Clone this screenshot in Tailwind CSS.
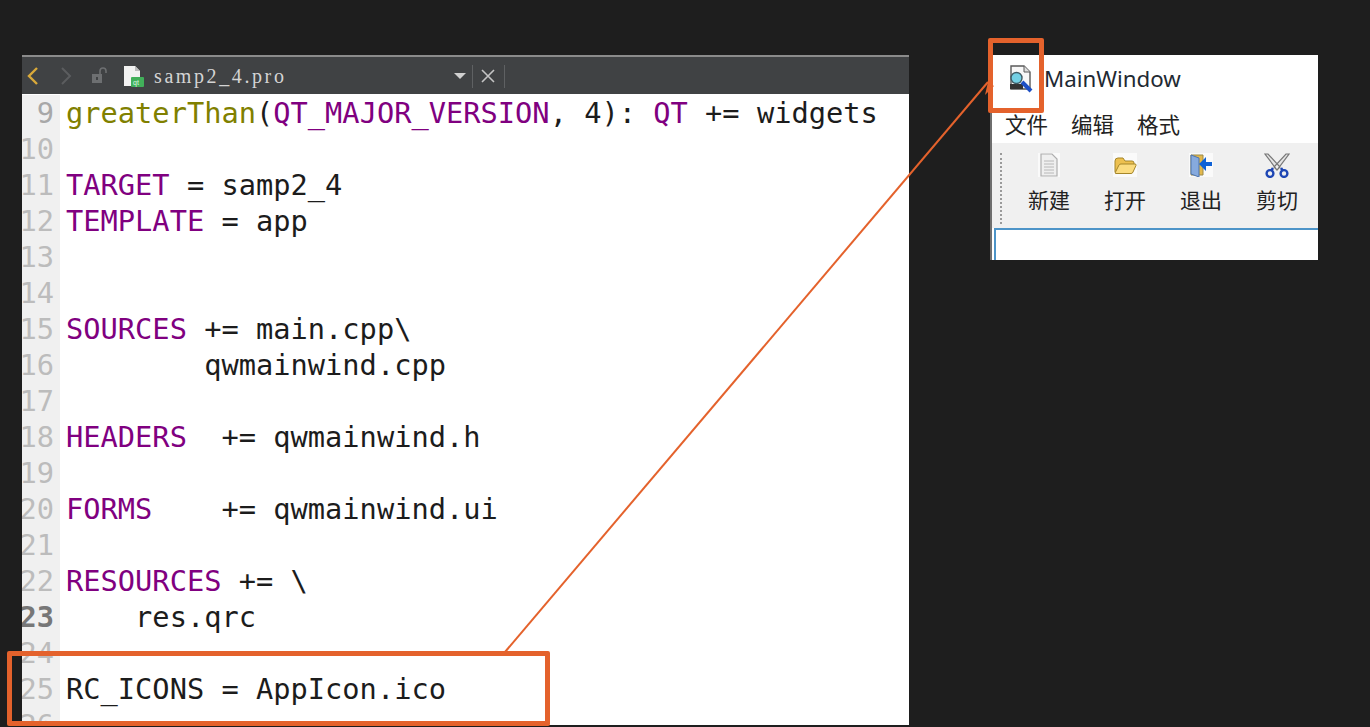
<!DOCTYPE html>
<html lang="zh">
<head>
  <meta charset="UTF-8" />
  <title>RC_ICONS AppIcon</title>
  <script src="https://cdn.jsdelivr.net/npm/@tailwindcss/browser@4"></script>
</head>
<body class="relative h-[727px] w-[1370px] overflow-hidden bg-[#1e1e1e]">
  <div class="flex items-start pt-[55px] pl-[22px]">
    <!-- editor -->
    <div class="flex h-[670px] w-[887px] flex-col overflow-hidden bg-white">
      <div class="flex h-[39px] shrink-0 items-center border-t-2 border-[#8b8b8b] bg-[#404244] pt-px">
        <svg class="ml-[4px] h-5 w-3.5" viewBox="0 0 14 20" fill="none" stroke="#d9a93a" stroke-width="2.4"><path d="M11 2 3 10l8 8"/></svg>
        <svg class="ml-[20px] h-5 w-3" viewBox="0 0 12 20" fill="none" stroke="#5b5d5f" stroke-width="2"><path d="m2 2 8 8-8 8"/></svg>
        <svg class="ml-[19px] h-5 w-[20px]" viewBox="0 0 20 20"><rect x="1" y="8" width="10" height="9" fill="#6d6f71"/><rect x="5" y="11" width="2" height="3" fill="#404244"/><path d="M9 8V5a3 3 0 0 1 6 0v2" fill="none" stroke="#6d6f71" stroke-width="1.6"/></svg>
        <svg class="ml-[12px] h-[23px] w-[22px]" viewBox="0 0 22 23"><path d="M1 1h11l5 5v15H1z" fill="#f2f2f2"/><path d="M12 1v5h5" fill="#bbb"/><rect x="8" y="12" width="13" height="10" rx="1" fill="#41b05a"/><text x="10" y="20" font-size="7" fill="#dff5e2" font-family="Liberation Sans, sans-serif">qt</text></svg>
        <span class="ml-[9px] w-[127px] font-['Liberation_Serif',serif] text-[20px] tracking-[2.6px] text-[#d4d4d4]">samp2_4.pro</span>
        <svg class="ml-[172px] h-2 w-[14px]" viewBox="0 0 14 8"><path d="M1 1h12L7 7z" fill="#d0d0d0"/></svg>
        <div class="ml-[5px] h-[23px] w-px bg-[#5f6163]"></div>
        <svg class="ml-[7px] h-4 w-4" viewBox="0 0 16 16" fill="none" stroke="#c4c4c4" stroke-width="1.6"><path d="m2 2 12 12M14 2 2 14"/></svg>
        <div class="ml-[8px] h-[23px] w-px bg-[#5f6163]"></div>
      </div>
      <div class="grid flex-1 auto-rows-[36px] overflow-hidden pt-px font-['DejaVu_Sans_Mono',monospace] text-[28.7px] leading-9 whitespace-pre text-[#1c1c1c]">
        <div class="flex"><span class="w-[38px] shrink-0 bg-[#f0f0f0] pr-[6px] text-right text-[#a8a8a8]">9</span><span class="pl-1.5"><span class="text-[#808000]">greaterThan</span>(<span class="text-[#800080]">QT_MAJOR_VERSION</span>, 4): <span class="text-[#800080]">QT</span> += widgets</span></div>
        <div class="flex"><span class="flex w-[38px] shrink-0 justify-end overflow-hidden bg-[#f0f0f0] pr-[6px] text-[#bcbcbc]">10</span></div>
        <div class="flex"><span class="flex w-[38px] shrink-0 justify-end overflow-hidden bg-[#f0f0f0] pr-[6px] text-[#bcbcbc]">11</span><span class="pl-1.5"><span class="text-[#800080]">TARGET</span> = samp2_4</span></div>
        <div class="flex"><span class="flex w-[38px] shrink-0 justify-end overflow-hidden bg-[#f0f0f0] pr-[6px] text-[#bcbcbc]">12</span><span class="pl-1.5"><span class="text-[#800080]">TEMPLATE</span> = app</span></div>
        <div class="flex"><span class="flex w-[38px] shrink-0 justify-end overflow-hidden bg-[#f0f0f0] pr-[6px] text-[#bcbcbc]">13</span></div>
        <div class="flex"><span class="flex w-[38px] shrink-0 justify-end overflow-hidden bg-[#f0f0f0] pr-[6px] text-[#bcbcbc]">14</span></div>
        <div class="flex"><span class="flex w-[38px] shrink-0 justify-end overflow-hidden bg-[#f0f0f0] pr-[6px] text-[#bcbcbc]">15</span><span class="pl-1.5"><span class="text-[#800080]">SOURCES</span> += main.cpp\</span></div>
        <div class="flex"><span class="flex w-[38px] shrink-0 justify-end overflow-hidden bg-[#f0f0f0] pr-[6px] text-[#bcbcbc]">16</span><span class="pl-1.5">        qwmainwind.cpp</span></div>
        <div class="flex"><span class="flex w-[38px] shrink-0 justify-end overflow-hidden bg-[#f0f0f0] pr-[6px] text-[#bcbcbc]">17</span></div>
        <div class="flex"><span class="flex w-[38px] shrink-0 justify-end overflow-hidden bg-[#f0f0f0] pr-[6px] text-[#bcbcbc]">18</span><span class="pl-1.5"><span class="text-[#800080]">HEADERS</span>  += qwmainwind.h</span></div>
        <div class="flex"><span class="flex w-[38px] shrink-0 justify-end overflow-hidden bg-[#f0f0f0] pr-[6px] text-[#bcbcbc]">19</span></div>
        <div class="flex"><span class="flex w-[38px] shrink-0 justify-end overflow-hidden bg-[#f0f0f0] pr-[6px] text-[#bcbcbc]">20</span><span class="pl-1.5"><span class="text-[#800080]">FORMS</span>    += qwmainwind.ui</span></div>
        <div class="flex"><span class="flex w-[38px] shrink-0 justify-end overflow-hidden bg-[#f0f0f0] pr-[6px] text-[#bcbcbc]">21</span></div>
        <div class="flex"><span class="flex w-[38px] shrink-0 justify-end overflow-hidden bg-[#f0f0f0] pr-[6px] text-[#bcbcbc]">22</span><span class="pl-1.5"><span class="text-[#800080]">RESOURCES</span> += \</span></div>
        <div class="flex"><span class="flex w-[38px] shrink-0 justify-end overflow-hidden bg-[#f0f0f0] pr-[6px] font-bold text-[#777777]">23</span><span class="pl-1.5">    res.qrc</span></div>
        <div class="flex"><span class="flex w-[38px] shrink-0 justify-end overflow-hidden bg-[#f0f0f0] pr-[6px] text-[#bcbcbc]">24</span></div>
        <div class="flex"><span class="flex w-[38px] shrink-0 justify-end overflow-hidden bg-[#f0f0f0] pr-[6px] text-[#bcbcbc]">25</span><span class="pl-1.5">RC_ICONS = AppIcon.ico</span></div>
        <div class="flex"><span class="flex w-[38px] shrink-0 justify-end overflow-hidden bg-[#f0f0f0] pr-[6px] text-[#bcbcbc]">26</span></div>
      </div>
    </div>

    <!-- small window -->
    <div class="ml-[81px] flex h-[205px] w-[328px] flex-col border-l-2 border-[#6e6e6e] bg-white font-['Noto_Sans','Noto_Sans_CJK_SC',sans-serif] text-[#222]">
      <div class="flex h-[48px] shrink-0 items-center">
        <svg class="ml-[15px] h-[30px] w-[28px]" viewBox="0 0 28 30">
          <path d="M4 2h13l6 6v17H4z" fill="#f7f7f7" stroke="#5a5a5a" stroke-width="1.4"/>
          <path d="M17 2v6h6" fill="#ddd" stroke="#5a5a5a" stroke-width="1"/>
          <rect x="3" y="20" width="13" height="5" fill="#333"/>
          <path d="m15 18 9 9" stroke="#1d4fc4" stroke-width="4"/>
          <circle cx="9.5" cy="14" r="5.5" fill="#73d0e4" stroke="#3f5c66" stroke-width="1.4"/>
        </svg>
        <span class="ml-[9px] text-[22.3px] text-[#1f2a33]">MainWindow</span>
      </div>
      <div class="flex h-[40px] shrink-0 items-center gap-[23px] pt-[4px] pl-[13px] text-[21.5px]">
        <span>文件</span><span>编辑</span><span>格式</span>
      </div>
      <div class="flex h-[85px] shrink-0 bg-[#f0f0f0] pt-[10px]">
        <div class="ml-[8px] h-[71px] w-[3px] border-l-2 border-dotted border-[#9a9a9a]"></div>
        <div class="ml-[8px] flex w-[76px] flex-col items-center">
          <svg class="h-[24px] w-[24px]" viewBox="0 0 24 24"><rect x="1" y="0" width="22" height="24" fill="#fafafa"/><path d="M4 1h11l5 5v17H4z" fill="#efefef" stroke="#aeaeae" stroke-width="1.2"/><path d="M7 8h10M7 11h10M7 14h10M7 17h10M7 20h10" stroke="#b8b8b8"/></svg>
          <span class="mt-[9px] text-[21px] leading-7">新建</span>
        </div>
        <div class="flex w-[76px] flex-col items-center">
          <svg class="h-[24px] w-[24px]" viewBox="0 0 24 24"><rect width="24" height="24" fill="#fafafa"/><path d="M2 19V8q0-3 3-3h5l2 3h7q2 0 2 2v2" fill="#edc04f" stroke="#a5862a"/><path d="M2 20 6 12q.5-1 2-1h14q1.500 0 1 1.500L20 19q-.5 1.500-2 1.500H3z" fill="#fbdc80" stroke="#a5862a"/></svg>
          <span class="mt-[9px] text-[21px] leading-7">打开</span>
        </div>
        <div class="flex w-[76px] flex-col items-center">
          <svg class="h-[24px] w-[24px]" viewBox="0 0 24 24"><rect width="24" height="24" fill="#fafafa"/><path d="M2 2h12v20H2z" fill="#e3b84c" stroke="#9a8a4a"/><path d="M2 2l8 3v19l-8-3z" fill="#86aade" stroke="#4d74ae"/><path d="M23 9h-6V4l-7 7 7 7v-5h6z" fill="#0f62d6"/></svg>
          <span class="mt-[9px] text-[21px] leading-7">退出</span>
        </div>
        <div class="flex w-[76px] flex-col items-center">
          <svg class="h-[25px] w-[26px]" viewBox="0 0 26 25" fill="none"><path d="M1 1 4 1 16 14 13 17zM25 1 22 1 10 14 13 17z" fill="#e4e4e4" stroke="#777" stroke-width="1.2"/><path d="m9 15-2 3M17 15l2 3" stroke="#1e46b4" stroke-width="2.5"/><circle cx="6" cy="20.500" r="3.400" stroke="#1e46b4" stroke-width="2.400"/><circle cx="20" cy="20.500" r="3.400" stroke="#1e46b4" stroke-width="2.400"/></svg>
          <span class="mt-[8px] text-[21px] leading-7">剪切</span>
        </div>
      </div>
      <div class="ml-[2px] flex-1 border-t-2 border-l-2 border-[#4d94c8] bg-white"></div>
    </div>
  </div>

  <!-- annotations -->
  <svg class="absolute top-0 left-0" width="1370" height="727" viewBox="0 0 1370 727" fill="none">
    <path d="M505 652 988 82" stroke="#e4622c" stroke-width="2"/>
    <path d="M988 82l-3 13 9-9z" fill="#e4622c"/>
  </svg>
  <div class="absolute top-[38px] left-[988px] h-[75px] w-[56px] rounded-[2px] border-[5px] border-[#e4622c]"></div>
  <div class="absolute top-[651px] left-[7px] h-[75px] w-[543px] rounded-[2px] border-[5px] border-[#e4622c]"></div>
</body>
</html>
